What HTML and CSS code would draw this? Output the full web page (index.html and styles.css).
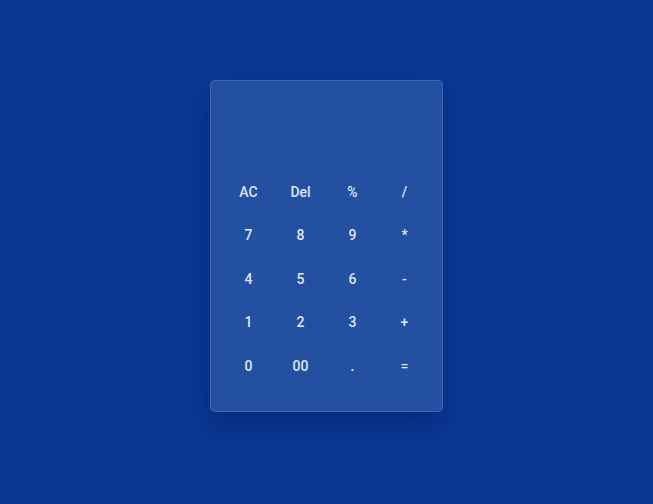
FILE: index.html
```html
<!DOCTYPE html>
<html>
<head>
<meta charset="utf-8">
<link rel="stylesheet" href="styles.css">
</head>
<body>
<div class="calc">
  <div class="display"></div>
  <div class="keys">
    <button class="key">AC</button>
    <button class="key">Del</button>
    <button class="key">%</button>
    <button class="key">/</button>
    <button class="key">7</button>
    <button class="key">8</button>
    <button class="key">9</button>
    <button class="key">*</button>
    <button class="key">4</button>
    <button class="key">5</button>
    <button class="key">6</button>
    <button class="key">-</button>
    <button class="key">1</button>
    <button class="key">2</button>
    <button class="key">3</button>
    <button class="key">+</button>
    <button class="key">0</button>
    <button class="key">00</button>
    <button class="key">.</button>
    <button class="key">=</button>
  </div>
</div>
</body>
</html>
```
FILE: styles.css
```css
html, body {
  margin: 0;
  height: 100%;
}
body {
  background: #0a3893;
  display: flex;
  justify-content: center;
  align-items: flex-start;
  font-family: Roboto, "Liberation Sans", sans-serif;
}
.calc {
  margin-top: 80px;
  width: 233px;
  height: 332px;
  box-sizing: border-box;
  background: #2450a1;
  border: 1px solid rgba(255,255,255,0.12);
  border-radius: 5px;
  box-shadow: 0 12px 24px rgba(0, 20, 80, 0.35);
  display: flex;
  flex-direction: column;
  padding: 0 12px 23px 12px;
}
.display {
  height: 89px;
}
.keys {
  display: grid;
  grid-template-columns: repeat(4, 52px);
  grid-auto-rows: 43.5px;
  justify-content: center;
}
.key {
  background: none;
  border: none;
  padding: 0;
  margin: 0;
  font-family: Roboto, "Liberation Sans", sans-serif;
  font-size: 14px;
  font-weight: 500;
  color: #dfe5f1;
  cursor: pointer;
}
```
